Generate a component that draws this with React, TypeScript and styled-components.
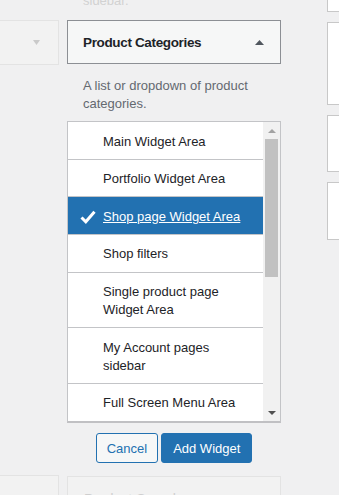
import React from 'react'
import styled, { createGlobalStyle } from 'styled-components'

const GlobalStyle = createGlobalStyle`
  html, body {
    margin: 0;
    padding: 0;
    background: #f0f0f1;
    overflow: hidden;
  }
  body {
    font-family: 'Liberation Sans', Arial, sans-serif;
    font-size: 13px;
    color: #1d2327;
  }
`

const Screen = styled.div`
  display: flex;
  align-items: flex-start;
  width: 339px;
  height: 495px;
  overflow: hidden;
`

const SideColumn = styled.div`
  width: 59px;
  flex-shrink: 0;
  display: flex;
  flex-direction: column;
`

const MainColumn = styled.div`
  width: 214px;
  flex-shrink: 0;
  margin-left: 8px;
  margin-top: -8px;
  display: flex;
  flex-direction: column;
`

const RightColumn = styled.div`
  flex: 1;
  margin-left: 46px;
  margin-top: -20px;
  display: flex;
  flex-direction: column;
  gap: 10px;
`

const FadedBox = styled.div<{ $top?: number; $height: number; $noLeft?: boolean }>`
  margin-top: ${(p) => p.$top || 0}px;
  height: ${(p) => p.$height}px;
  box-sizing: border-box;
  border: 1px solid #e3e3e3;
  ${(p) => (p.$noLeft ? 'border-left: none;' : '')}
  background: #f2f2f2;
  display: flex;
  align-items: center;
  justify-content: flex-end;
  padding: 0 18px 0 16px;
`

const FadedTitle = styled.span`
  flex: 1;
  align-self: flex-start;
  margin-top: 14px;
  color: #cfcfcf;
  font-size: 14px;
`

const FadedText = styled.div`
  padding-left: 16px;
  line-height: 18px;
  color: #d2d2d2;
`

const OtherSidebar = styled.div<{ $height: number }>`
  height: ${(p) => p.$height}px;
  box-sizing: border-box;
  border: 1px solid #c8c8c8;
  border-right: none;
  background: #fff;
`

const WidgetHeader = styled.div`
  margin-top: 10px;
  height: 44px;
  box-sizing: border-box;
  border: 1px solid #8c8f94;
  background: #f6f7f7;
  display: flex;
  align-items: center;
  justify-content: space-between;
  padding: 0 16px 0 15px;
`

const WidgetTitle = styled.h3`
  margin: 0;
  font-size: 13.5px;
  font-weight: 700;
  letter-spacing: -0.35px;
  color: #1d2327;
`

const Description = styled.p`
  margin: 13px 0 0;
  padding: 0 16px;
  line-height: 18px;
  color: #646970;
`

const Chooser = styled.div`
  margin-top: 8px;
  height: 302px;
  box-sizing: border-box;
  border: 1px solid #c3c4c7;
  border-bottom: 2px solid #c0c0c3;
  background: #fff;
  display: flex;
  overflow: hidden;
`

const SidebarList = styled.ul`
  flex: 1;
  margin: 0;
  padding: 0;
  list-style: none;
  overflow: hidden;
`

const SidebarItem = styled.li<{ $selected?: boolean }>`
  position: relative;
  padding: 10.5px 10px 8.17px 35px;
  line-height: 18px;
  border-bottom: 1px solid #c3c4c7;
  background: ${(p) => (p.$selected ? '#2271b1' : '#fff')};
  color: ${(p) => (p.$selected ? '#fff' : '#1d2327')};
  text-decoration: ${(p) => (p.$selected ? 'underline' : 'none')};
  cursor: pointer;
`

const Check = styled.svg`
  position: absolute;
  left: 12px;
  top: 50%;
  margin-top: -6px;
`

const Scrollbar = styled.div`
  width: 17px;
  flex-shrink: 0;
  background: #f1f1f1;
  display: flex;
  flex-direction: column;
`

const ScrollArrow = styled.div`
  height: 17px;
  display: flex;
  align-items: center;
  justify-content: center;
`

const ScrollTrack = styled.div`
  flex: 1;
  padding: 0 2px;
`

const ScrollThumb = styled.div`
  height: 138px;
  background: #c1c1c1;
`

const Actions = styled.div`
  margin-top: 10px;
  display: flex;
  justify-content: center;
  gap: 3px;
`

const Button = styled.button<{ $primary?: boolean }>`
  height: 30px;
  padding: 0 ${(p) => (p.$primary ? 11 : 10)}px;
  border-radius: 3px;
  border: 1px solid #2271b1;
  background: ${(p) => (p.$primary ? '#2271b1' : '#f6f7f7')};
  color: ${(p) => (p.$primary ? '#fff' : '#2271b1')};
  font-family: inherit;
  font-size: 13px;
  cursor: pointer;
`

const Triangle = ({ up, color, w = 9, h = 5 }: { up?: boolean; color: string; w?: number; h?: number }) => (
  <svg width={w} height={h} viewBox={`0 0 ${w} ${h}`}>
    <polygon points={up ? `0,${h} ${w / 2},0 ${w},${h}` : `0,0 ${w},0 ${w / 2},${h}`} fill={color} />
  </svg>
)

const sidebars = [
  'Main Widget Area',
  'Portfolio Widget Area',
  'Shop page Widget Area',
  'Shop filters',
  'Single product page Widget Area',
  'My Account pages sidebar',
  'Full Screen Menu Area',
  'Footer Widget Area',
]

const App: React.FC = () => {
  const selected = 2

  return (
    <>
      <GlobalStyle />
      <Screen>
        <SideColumn>
          <FadedBox $top={20} $height={45} $noLeft>
            <Triangle color="#cacaca" w={7} h={5} />
          </FadedBox>
          <FadedBox $top={410} $height={40} $noLeft />
        </SideColumn>

        <MainColumn>
          <FadedText>sidebar.</FadedText>
          <WidgetHeader>
            <WidgetTitle>Product Categories</WidgetTitle>
            <Triangle up color="#50575e" />
          </WidgetHeader>
          <Description>A list or dropdown of product categories.</Description>

          <Chooser>
            <SidebarList>
              {sidebars.map((name, i) => (
                <SidebarItem key={name} $selected={i === selected}>
                  {i === selected && (
                    <Check width="16" height="14" viewBox="0 0 16 14">
                      <path d="M1.5 7.5 L5.8 11.8 L14.5 1.8" fill="none" stroke="#fff" strokeWidth="3" strokeLinejoin="miter" />
                    </Check>
                  )}
                  {name}
                </SidebarItem>
              ))}
            </SidebarList>
            <Scrollbar>
              <ScrollArrow>
                <Triangle up color="#a3a3a3" w={8} h={4} />
              </ScrollArrow>
              <ScrollTrack>
                <ScrollThumb />
              </ScrollTrack>
              <ScrollArrow>
                <Triangle color="#505050" w={8} h={4} />
              </ScrollArrow>
            </Scrollbar>
          </Chooser>

          <Actions>
            <Button>Cancel</Button>
            <Button $primary>Add Widget</Button>
          </Actions>

          <FadedBox $top={13} $height={60}>
            <FadedTitle>Product Search</FadedTitle>
          </FadedBox>
        </MainColumn>

        <RightColumn>
          <OtherSidebar $height={32} />
          <OtherSidebar $height={83} />
          <OtherSidebar $height={57} />
          <OtherSidebar $height={58} />
        </RightColumn>
      </Screen>
    </>
  )
}

export default App
